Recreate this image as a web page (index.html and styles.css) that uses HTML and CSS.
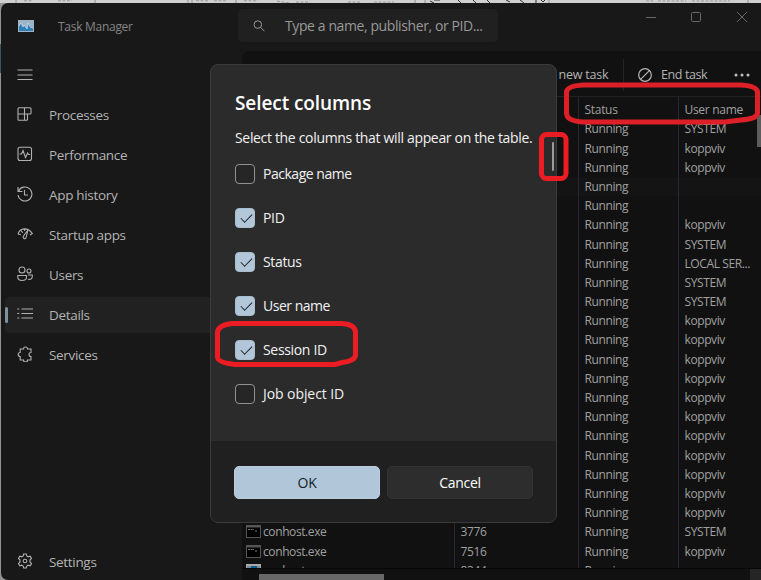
FILE: index.html
```html
<!DOCTYPE html>
<html lang="en">
<head>
<meta charset="utf-8">
<title>Task Manager</title>
<link rel="stylesheet" href="styles.css">
</head>
<body>
<svg class="backdrop" viewBox="0 0 761 580" aria-hidden="true">
  <rect width="761" height="580" fill="#929292"/>
  <rect width="761" height="3" fill="#cfcfcf"/>
  <rect y="44" width="1" height="29" fill="#39566b"/>
  <path d="M16 0V3M95 0V3M188 0V3M192 0V3M236 0V3M415 0V3M425 0V3M549 0V3M748 0V3" stroke="#929292"/>
  <path d="M24 .8h8M58 .8h14M196 .8h12M214 .8h13M244 .8h14M277 1l12 2M296 2h14M348 2h12M374 2h20M646 1h7M658 1h28M692 1h38" stroke="#999" stroke-dasharray="3 1.5"/>
  <path d="M430 1l4 2M434 0h6M458 0l3 3M473 0l3 3M487 0l3 3M506 0l4 2M520 0l4 3M536 0v3M541 0l2 2 2-2" stroke="#333"/>
</svg>
<div class="window">
  <header class="titlebar">
    <svg class="app-icon" viewBox="0 0 16 12"><rect width="16" height="12" fill="#9eb3c4"/><path d="M1 11V6l2-3 2 4 1-2 3 4 1-6 2 3 1 1 2 1v3z" fill="#2f7eb5"/><path d="M1 6l2-3 2 4 1-2 3 4 1-6 2 4 3 1" fill="none" stroke="#d2e2ee" stroke-width=".7"/></svg>
    <span class="app-name">Task Manager</span>
    <div class="search">
      <svg class="search-icon" viewBox="0 0 12 12"><circle cx="4.8" cy="4.6" r="3.8"/><path d="M7.6 7.4l3.8 3.8"/></svg>
      <span class="t-search">Type a name, publisher, or PID...</span>
    </div>
    <svg class="caption" viewBox="0 0 104 12"><path d="M1 6.5h10"/><rect x="46.5" y="1.5" width="9" height="9" rx="1"/><path d="M92 1l10 10M102 1l-10 10"/></svg>
  </header>
  <div class="main">
    <nav class="nav">
      <div class="item menu"><svg viewBox="0 0 16 16"><path d="M.5 3h15M.5 8h15M.5 12.5h15"/></svg></div>
      <div class="item"><svg viewBox="0 0 16 16"><path d="M2 1.800h5.500v12.500H2a1 1 0 0 1-1-1V2.800a1 1 0 0 1 1-1zM1 8h6.500M7.500 1.800H13a1 1 0 0 1 1 1V7a1 1 0 0 1-1 1H7.500M7.500 8H10.500v5.300a1 1 0 0 1-1 1H7"/></svg><span class="n1">Processes</span></div>
      <div class="item"><svg viewBox="0 0 16 16"><rect x="1" y="1.200" width="13.500" height="13.300" rx="2"/><path d="M2.500 8h2l1.500-3.500 2.500 7 2-4.500 1 1.500h1.500"/></svg><span class="n2">Performance</span></div>
      <div class="item"><svg viewBox="0 0 16 16"><path d="M1 1v4.500h4.500M1.500 5.200A7 7 0 1 1 1 9M7.500 4v5H11"/></svg><span class="n3">App history</span></div>
      <div class="item"><svg viewBox="0 0 16 16"><path d="M1 8C3 1.500 11 1 15.300 7.500L13 9M1 8l2.800.7M4 4.500l1.800 2.300M7.500 2.800V5"/><path d="M11 3.800L6.200 10.500a1.600 1.600 0 0 0 2.700 1.600L11 3.800"/></svg><span class="n4">Startup apps</span></div>
      <div class="item"><svg viewBox="0 0 16 16"><circle cx="5" cy="4" r="3"/><circle cx="12" cy="5" r="2"/><path d="M.8 9.500h8.700v1.800c0 4.300-8.700 4.300-8.700 0zM11 9h4.300v1.500c0 2.500-2 3.300-4.300 2.800"/></svg><span class="n5">Users</span></div>
      <div class="item selected"><svg viewBox="0 0 16 16"><path d="M.3 3h2M.3 7.500h2M.3 12h2M4.500 3h11.500M4.500 7.500h11.500M4.500 12h11.500"/></svg><span class="n6">Details</span></div>
      <div class="item"><svg viewBox="0 0 16 16"><path d="M3.200 3h3.300a2 2 0 0 1 4 0H14v3.500a1.900 1.900 0 1 0 0 4V14h-3.500a2 2 0 0 1-4 0H3.200v-3.500a2 2 0 1 1 0-4V3z"/></svg><span class="n7">Services</span></div>
      <div class="item settings"><svg viewBox="0 0 16 16"><path d="M6.700 1h2.600l.5 2 1.400.8 2-.6 1.300 2.300L13 7v2l1.500 1.500-1.300 2.300-2-.6-1.400.8-.5 2H6.700l-.5-2-1.400-.8-2 .6-1.300-2.300L3 9V7L1.500 5.500l1.300-2.300 2 .6L6.200 3z"/><circle cx="8" cy="8" r="1.800"/></svg><span class="n8">Settings</span></div>
    </nav>
    <section class="content">
      <div class="toolbar">
        <span class="run">Run new task</span>
        <span class="rule"></span>
        <svg class="end-icon" viewBox="0 0 14 14"><circle cx="7" cy="7" r="6.300"/><path d="M2.600 11.400l8.800-8.800"/></svg>
        <span class="end">End task</span>
        <svg class="more" viewBox="0 0 16 4"><circle cx="2" cy="2" r="1.500"/><circle cx="8" cy="2" r="1.500"/><circle cx="14" cy="2" r="1.500"/></svg>
      </div>
      <div class="thead"><span></span><span></span><span>Status</span><span>User name</span></div>
      <div class="tbody" id="rows"></div>
      <div class="hscroll"><span class="thumb"></span><span class="corner"></span></div>
      <span class="vthumb"></span>
    </section>
  </div>
</div>
<div class="dialog">
  <div class="body">
    <h1><span>Select columns</span></h1>
    <p><span>Select the columns that will appear on the table.</span></p>
    <div class="check"><i></i><span class="tight">Package name</span></div>
    <div class="check on"><i></i><span>PID</span></div>
    <div class="check on"><i></i><span>Status</span></div>
    <div class="check on"><i></i><span class="tight">User name</span></div>
    <div class="check on"><i></i><span>Session ID</span></div>
    <div class="check"><i></i><span class="wide">Job object ID</span></div>
    <span class="scroll"></span>
  </div>
  <div class="footer"><button class="ok">OK</button><button class="cancel">Cancel</button></div>
</div>
<svg class="marks" viewBox="0 0 761 580" aria-hidden="true">
  <path stroke="#dd2028" d="M583 85H741Q757 86 757.500 92V113Q757 119 741 120L725 122H583Q566.500 121 566.500 113V92Q567 86 583 85Z"/>
  <rect x="541.500" y="134.500" width="24.500" height="44" rx="5"/>
  <path d="M232 323.500H342Q355 324.500 355.500 332V355Q355 361 342 362.500L335 364.500H235Q217.500 362.500 217.500 357V332Q218.500 325 232 323.500Z"/>
</svg>
<script src="app.js"></script>
</body>
</html>
```
FILE: app.js
```js
const users = ["SYSTEM", "koppviv", "koppviv", "", "", "koppviv", "SYSTEM", "LOCAL SER...", "SYSTEM", "SYSTEM",
  ...Array(11).fill("koppviv"), "SYSTEM", "koppviv", ""];
const processes = { 21: ["conhost.exe", "3776"], 22: ["conhost.exe", "7516"], 23: ["conhost.exe", "8344"] };
const cmdIcon = '<svg class="proc" viewBox="0 0 15 13"><rect width="15" height="13" fill="#555"/><rect x="1" y="2.500" width="13" height="9.500" fill="#000"/><path d="M2 4.500h6M9 6h2" stroke="#777" stroke-dasharray="2 .7"/></svg>';
const winIcon = '<svg class="proc" viewBox="0 0 15 13"><rect width="15" height="13" fill="#aaa"/><rect x="1" y="2" width="13" height="10" fill="#789"/><rect x="5" y="2" width="6" height="9" fill="#0b5c94"/></svg>';
document.getElementById("rows").innerHTML = users.map((user, i) => {
  const p = processes[i];
  const icon = p ? (i === 23 ? winIcon : cmdIcon) : "";
  return `<div class="row${i === 3 ? " hover" : ""}"><span class="name">${icon}${p ? `<b>${p[0]}</b>` : ""}</span><span class="pid">${p ? p[1] : ""}</span><span>Running</span><span>${user}</span></div>`;
}).join("");
```
FILE: styles.css
```css
* { box-sizing: border-box; }
body { margin: 0; width: 761px; height: 580px; overflow: hidden; position: relative; background: #929292; font: 13.500px/18px "Open Sans", "Noto Sans", sans-serif; color: #b4b4b4; }
svg { fill: none; stroke: currentColor; flex: none; display: block; }
span { white-space: nowrap; }
.backdrop, .marks { position: absolute; inset: 0; width: 761px; height: 580px; stroke: none; }
.marks { stroke: #ec1c24; stroke-width: 5; }
.window { position: relative; margin: 3px 0 0 1px; height: 577px; background: #181818; border-radius: 7px 0 0 7px; overflow: hidden; display: flex; flex-direction: column; }
.titlebar { height: 48px; display: flex; align-items: flex-start; padding-left: 17px; flex: none; }
.app-icon { width: 16px; height: 12px; margin-top: 17px; stroke: none; }
.app-name { margin: 15px 0 0 24px; width: 180px; font-size: 12px; color: #858585; letter-spacing: -.28px; }
.search { width: 260px; height: 33px; margin-top: 6px; border-radius: 5px; background: #202020; display: flex; align-items: center; padding-left: 15px; gap: 20px; color: #999; font-size: 14px; letter-spacing: -.4px; }
.search-icon { width: 12px; height: 12px; stroke-width: 1; }
.caption { width: 104px; height: 12px; margin: 8px 0 0 147px; color: #707070; stroke-width: .9; }
.main { flex: 1; display: flex; min-height: 0; }
.nav { width: 241px; display: flex; flex-direction: column; padding: 5px 0 0 4px; flex: none; letter-spacing: -.32px; }
.item { height: 36px; margin-bottom: 4px; padding-left: 12px; display: flex; align-items: center; gap: 16px; border-radius: 4px; position: relative; }
.item svg { width: 16px; height: 16px; stroke-width: 1.100; color: #b0b0b0; position: relative; top: -1px; }
.item.menu svg { top: 1px; }
.item.menu { margin-bottom: 5px; }
.selected { background: #212121; }
.selected::before { content: ""; position: absolute; left: 0; top: 10px; width: 3px; height: 16px; border-radius: 2px; background: #80919e; }
.settings { margin-top: auto; margin-bottom: 0; }
.content { flex: 1; background: #111; border-radius: 7px 0 0 0; display: flex; flex-direction: column; position: relative; min-width: 0; }
.toolbar { height: 45px; display: flex; align-items: center; flex: none; padding: 3px 0 0 291px; }
.run { width: 84px; margin-right: 6px; font-size: 12.500px; letter-spacing: -.2px; }
.rule { width: 1px; height: 32px; background: #242424; }
.end-icon { width: 14px; height: 14px; margin-left: 14px; stroke-width: 1.200; }
.end { margin-left: 9px; font-size: 12.500px; width: 73px; letter-spacing: -.4px; }
.more { width: 16px; height: 4px; fill: #c0c0c0; stroke: none; }
.thead, .row { display: grid; grid-template-columns: 212px 124px 100px 1fr; font-size: 12px; letter-spacing: -.4px; }
.thead { height: 23.400px; border-top: 1px solid #222; line-height: 25px; flex: none; }
.thead span, .row span { padding-left: 5.500px; border-left: 1px solid #262a30; color: #a0a0a0; }
.thead span:nth-child(-n+2), .row .name { border-color: transparent; }
.thead span { letter-spacing: -.3px; }
.tbody { flex: 1; overflow: hidden; min-height: 0; }
.row { height: 19.200px; line-height: 19.200px; }
.row.hover { background: #141414; }
.row .name { display: flex; padding-left: 3px; gap: 2px; align-items: center; }
.row b { font-weight: 400; }
.proc { width: 15px; height: 13px; stroke: none; }
.hscroll { height: 12px; flex: none; border-top: 1px solid #080808; display: flex; padding: 5px 0 0 17px; justify-content: space-between; }
.thumb { width: 125px; height: 6px; background: #686868; }
.corner { width: 11px; height: 11px; margin-top: -5px; background: #252525; }
.vthumb { position: absolute; right: 0; top: 64px; width: 4px; height: 32px; background: #5c5c5c; }
.dialog { position: absolute; left: 210px; top: 64px; width: 347px; height: 459px; border: 1px solid #3b3b3b; border-radius: 8px; overflow: hidden; background: #2b2b2b; color: #f2f2f2; display: flex; flex-direction: column; }
.body { height: 376px; flex: none; padding: 25px 0 0 24px; position: relative; font-size: 14px; letter-spacing: -.33px; }
h1 { margin: 0; font-size: 19px; line-height: 26px; font-weight: 600; color: #fff; letter-spacing: -.08px; }
p { margin: 12px 0 4px; line-height: 20px; }
.check { height: 44px; display: flex; align-items: center; gap: 8px; }
.check span { position: relative; top: -.500px; }
.tight { letter-spacing: -.48px; }
.wide { letter-spacing: -.08px; }
.check i { width: 20px; height: 20px; border: 1px solid #929292; border-radius: 4px; background: #262626; position: relative; }
.check.on i { background: #b1c6d8; border-color: #a9bdcd; }
.check.on i::after { content: ""; position: absolute; left: 4.500px; top: 4.500px; width: 9.500px; height: 5px; border: solid #1c2228; border-width: 0 0 1.300px 1.300px; transform: rotate(-45deg); }
.scroll { position: absolute; right: 2px; top: 77px; width: 2px; height: 29px; background: #9b9b9b; border-radius: 1px; }
.footer { flex: 1; background: #202020; padding: 25px 23px; display: flex; gap: 7px; align-items: flex-start; }
button { flex: 1; height: 33px; border: 1px solid #333; border-radius: 5px; background: #2d2d2d; color: #fff; font: 14px "Open Sans", sans-serif; letter-spacing: -.33px; padding: 0; }
.ok { background: #b1c6d8; border-color: #b9cddd; color: #111c26; }
```
